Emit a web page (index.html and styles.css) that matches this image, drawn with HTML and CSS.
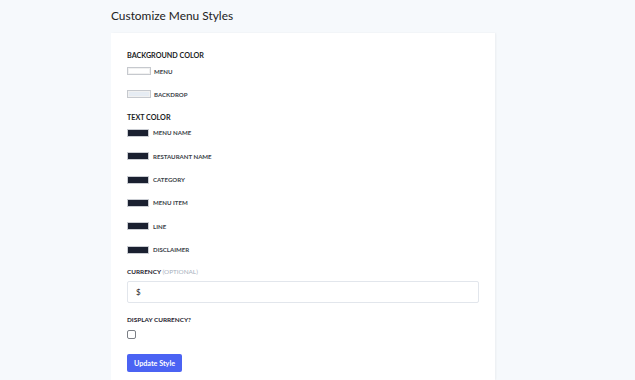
FILE: index.html
```html
<!DOCTYPE html>
<html>
<head>
<meta charset="utf-8">
<link rel="stylesheet" href="styles.css">
</head>
<body>
<div class="page">
  <h1 class="title">Customize Menu Styles</h1>
  <div class="card">
    <div class="group">
      <div class="heading">BACKGROUND COLOR</div>
      <div class="row"><span class="swatch"><span class="fill fill-white"></span></span><span class="label">MENU</span></div>
      <div class="row"><span class="swatch"><span class="fill fill-backdrop"></span></span><span class="label">BACKDROP</span></div>
    </div>
    <div class="group">
      <div class="heading">TEXT COLOR</div>
      <div class="row"><span class="swatch dark"><span class="fill fill-dark"></span></span><span class="label">MENU NAME</span></div>
      <div class="row"><span class="swatch dark"><span class="fill fill-dark"></span></span><span class="label">RESTAURANT NAME</span></div>
      <div class="row"><span class="swatch dark"><span class="fill fill-dark"></span></span><span class="label">CATEGORY</span></div>
      <div class="row"><span class="swatch dark"><span class="fill fill-dark"></span></span><span class="label">MENU ITEM</span></div>
      <div class="row"><span class="swatch dark"><span class="fill fill-dark"></span></span><span class="label">LINE</span></div>
      <div class="row"><span class="swatch dark"><span class="fill fill-dark"></span></span><span class="label">DISCLAIMER</span></div>
    </div>
    <div class="field-label">CURRENCY <span class="optional">(OPTIONAL)</span></div>
    <div class="input">$</div>
    <div class="field-label second">DISPLAY CURRENCY?</div>
    <div class="checkbox"></div>
    <button class="button">Update Style</button>
  </div>
</div>
</body>
</html>
```

FILE: styles.css
```css
html, body {
  margin: 0;
  padding: 0;
  background: #f6f9fc;
  font-family: Lato, "Open Sans", sans-serif;
  color: #1f2430;
}
.page {
  width: 384px;
  margin-left: 111px;
}
.title {
  margin: 0;
  padding-top: 8px;
  height: 25px;
  font-size: 11.9px;
  font-weight: 400;
  line-height: 16px;
  color: #222;
}
.card {
  background: #fff;
  box-shadow: 1px 0 2px rgba(0,0,0,0.05);
  padding: 18px 16px 8px 16px;
}
.group {
  display: flex;
  flex-direction: column;
}
.heading {
  font-size: 7.2px;
  font-weight: 700;
  line-height: 10px;
  color: #1a1d24;
  margin-bottom: 5px;
}
.row {
  display: flex;
  align-items: center;
  height: 10px;
  margin-bottom: 13.4px;
}
.swatch {
  width: 24px;
  height: 8px;
  box-sizing: border-box;
  border: 1px solid #c6c9ce;
  padding: 1px;
  display: flex;
  margin-right: 3px;
  background: #f1f1f1;
}
.swatch.dark {
  width: 22px;
  border-color: #c9ccd2;
  padding: 0;
  margin-right: 4px;
}
.fill {
  flex: 1;
}
.fill-white { background: #ffffff; }
.fill-backdrop { background: #e6ecf3; }
.fill-dark { background: #1a2030; }
.label {
  font-size: 6.1px;
  font-weight: 700;
  color: #3a3f49;
  margin-left: 0;
}
.field-label {
  font-size: 6.4px;
  font-weight: 700;
  color: #1f2430;
  line-height: 10px;
  margin-top: -1px;
}
.field-label.second {
  margin-top: 12px;
}
.optional {
  font-weight: 400;
  color: #a7b0bd;
}
.input {
  margin-top: 4px;
  height: 22px;
  width: 352px;
  box-sizing: border-box;
  border: 1px solid #e2e6ec;
  border-radius: 2px;
  padding-left: 8px;
  display: flex;
  align-items: center;
  font-size: 8px;
  color: #222;
}
.checkbox {
  margin-top: 5px;
  width: 7px;
  height: 7px;
  border: 1px solid #7b7f86;
  border-radius: 2px;
  background: #fff;
}
.button {
  display: block;
  margin-top: 15px;
  width: 55px;
  height: 18px;
  border: none;
  border-radius: 2px;
  background: #4b63f3;
  color: #fff;
  font-family: Lato, "Open Sans", sans-serif;
  font-size: 7.2px;
  font-weight: 700;
  padding: 0;
}
```
